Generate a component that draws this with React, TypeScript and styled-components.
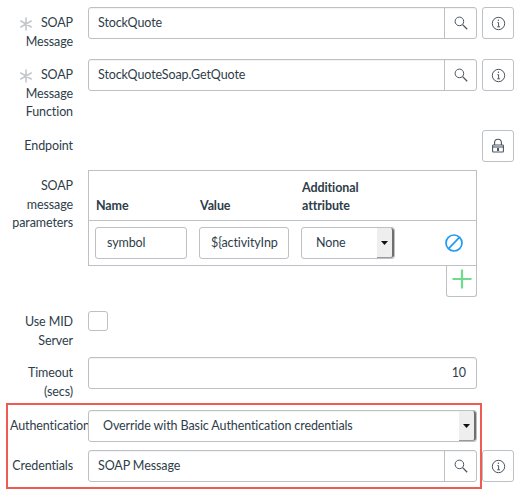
import { FC, ReactNode } from 'react';
import styled, { createGlobalStyle } from 'styled-components';

const GlobalStyle = createGlobalStyle`
  html, body {
    margin: 0;
    background: #fff;
  }
  body {
    font-family: Lato, "Noto Sans", sans-serif;
    font-size: 12.5px;
    letter-spacing: -0.1px;
    line-height: 18.7px;
    color: #2e3d49;
  }
`;

const SearchIcon: FC = () => (
  <svg width="14" height="14" viewBox="0 0 14 14" fill="none" stroke="#4a5560" strokeWidth="1">
    <circle cx="5.4" cy="5.4" r="4.3" />
    <path d="M8.6 8.6 13.2 13.2" strokeWidth="1.3" />
  </svg>
);

const InfoIcon: FC = () => (
  <svg width="15" height="15" viewBox="0 0 15 15" fill="none" stroke="#4a5560" strokeWidth="1">
    <circle cx="7.5" cy="7.5" r="6.2" />
    <path d="M6.4 6.6h1.2v4M6.2 10.8h2.8" />
    <circle cx="7.4" cy="4.2" r="0.7" fill="#4a5560" stroke="none" />
  </svg>
);

const LockIcon: FC = () => (
  <svg width="14" height="16" viewBox="0 0 14 16" fill="none" stroke="#4a5560" strokeWidth="1.1">
    <path d="M3.6 7V4.6a3.4 3.4 0 0 1 6.8 0V7" />
    <rect x="1.6" y="7" width="10.8" height="7" rx="0.8" />
    <path d="M1.6 9h10.8" />
    <rect x="6" y="10" width="2" height="3" fill="#4a5560" stroke="none" />
  </svg>
);

const StarIcon: FC = () => (
  <svg width="14" height="14" viewBox="0 0 14 14" stroke="#c4c8cb" strokeWidth="1.6" strokeLinecap="round">
    <path d="M7 1v12M1.8 4 12.2 10M1.8 10 12.2 4" />
  </svg>
);

const BlockIcon: FC = () => (
  <svg width="20" height="20" viewBox="0 0 20 20" fill="none" stroke="#1f9bf0" strokeWidth="1.7">
    <circle cx="10" cy="10" r="8" />
    <path d="M4.6 15.6 15.4 4.4" />
  </svg>
);

const PlusIcon: FC = () => (
  <svg width="20" height="20" viewBox="0 0 20 20" stroke="#6fdc8c" strokeWidth="2.2">
    <path d="M10 0.5v19M0.5 10h19" />
  </svg>
);

const SelectArrow: FC = () => (
  <ArrowBox>
    <svg width="7" height="4" viewBox="0 0 7 4">
      <path d="M0 0h7L3.5 4z" fill="#111" />
    </svg>
  </ArrowBox>
);

type FieldProps = { value: string };

const LookupField: FC<FieldProps> = ({ value }) => (
  <InputFrame>
    <InputText>{value}</InputText>
    <SearchButton><SearchIcon /></SearchButton>
  </InputFrame>
);

type RowProps = {
  label: ReactNode;
  required?: boolean;
  height: number;
  flush?: boolean;
  children: ReactNode;
  aside?: ReactNode;
};

const FormRow: FC<RowProps> = ({ label, required, height, flush, children, aside }) => (
  <Row style={{ height }}>
    <Label $flush={flush}>
      {required && <Star><StarIcon /></Star>}
      {label}
    </Label>
    <Control>{children}</Control>
    <Aside>{aside}</Aside>
  </Row>
);

const App: FC = () => (
  <Page>
    <GlobalStyle />
    <FormRow label={<>SOAP<br />Message</>} required height={52} aside={<IconButton><InfoIcon /></IconButton>}>
      <LookupField value="StockQuote" />
    </FormRow>
    <FormRow label={<>SOAP<br />Message<br />Function</>} required height={71} aside={<IconButton><InfoIcon /></IconButton>}>
      <LookupField value="StockQuoteSoap.GetQuote" />
    </FormRow>
    <FormRow label="Endpoint" height={40} aside={<IconButton><LockIcon /></IconButton>}>
      <span />
    </FormRow>
    <FormRow label={<>SOAP<br />message<br />parameters</>} height={136}>
      <ParamTable>
        <HeaderRow>
          <HeaderCell $width={104}>Name</HeaderCell>
          <HeaderCell $width={102}>Value</HeaderCell>
          <HeaderCell $width={120}>Additional<br />attribute</HeaderCell>
        </HeaderRow>
        <BodyRow>
          <CellInput $width={92} $indent={11}>symbol</CellInput>
          <CellInput $width={90} $indent={11}>{'${activityInp'}</CellInput>
          <CellSelect>
            None
            <SelectArrow />
          </CellSelect>
          <BlockSlot><BlockIcon /></BlockSlot>
        </BodyRow>
      </ParamTable>
      <AddRow>
        <AddButton><PlusIcon /></AddButton>
      </AddRow>
    </FormRow>
    <FormRow label={<>Use MID<br />Server</>} height={51}>
      <Checkbox />
    </FormRow>
    <FormRow label={<>Timeout<br />(secs)</>} height={53}>
      <InputFrame>
        <InputText $right>10</InputText>
      </InputFrame>
    </FormRow>
    <FormRow label="Authentication" flush height={40}>
      <InputFrame>
        <InputText $indent={14}>Override with Basic Authentication credentials</InputText>
        <SelectArrow />
      </InputFrame>
    </FormRow>
    <FormRow label="Credentials" height={40} aside={<IconButton><InfoIcon /></IconButton>}>
      <LookupField value="SOAP Message" />
    </FormRow>
    <Highlight />
  </Page>
);

export default App;

const Page = styled.div`
  position: relative;
  width: 526px;
  height: 494px;
  padding-top: 7px;
  box-sizing: border-box;
  overflow: hidden;
`;

const Row = styled.div`
  display: grid;
  grid-template-columns: 73px 389px 32px;
  column-gap: 15px;
`;

const Label = styled.div<{ $flush?: boolean }>`
  position: relative;
  padding-top: 7px;
  text-align: ${p => (p.$flush ? 'left' : 'right')};
  white-space: nowrap;
  ${p => p.$flush && 'padding-left: 10px; width: 88px; box-sizing: border-box; overflow: hidden;'}
`;

const Star = styled.span`
  position: absolute;
  left: 19px;
  top: 10px;
  display: flex;
`;

const Control = styled.div`
  grid-column: 2;
`;

const Aside = styled.div`
  grid-column: 3;
  margin-left: -10px;
`;

const InputFrame = styled.div`
  display: flex;
  align-items: stretch;
  height: 32px;
  box-sizing: border-box;
  border: 1px solid #bdc0c4;
  border-radius: 3px;
  background: #fff;
  box-shadow: inset 0 1px 1px rgba(0, 0, 0, 0.05);
`;

const InputText = styled.div<{ $right?: boolean; $indent?: number }>`
  flex: 1;
  display: flex;
  align-items: center;
  justify-content: ${p => (p.$right ? 'flex-end' : 'flex-start')};
  padding: 0 ${p => (p.$right ? 10 : 0)}px 0 ${p => p.$indent ?? 9}px;
`;

const SearchButton = styled.div`
  width: 31px;
  flex: none;
  display: flex;
  align-items: center;
  justify-content: center;
  border-left: 1px solid #bdc0c4;
`;

const IconButton = styled.div`
  width: 32px;
  height: 32px;
  box-sizing: border-box;
  display: flex;
  align-items: center;
  justify-content: center;
  border: 1px solid #bdc0c4;
  border-radius: 3px;
  background: #fff;
`;

const ParamTable = styled.div`
  border: 1px solid #bdc0c4;
  box-sizing: border-box;
  width: 389px;
  height: 96px;
`;

const HeaderRow = styled.div`
  display: flex;
  align-items: flex-end;
  height: 50px;
  box-sizing: border-box;
  padding: 0 0 4px 7px;
  border-bottom: 1px solid #bdc0c4;
`;

const HeaderCell = styled.div<{ $width: number }>`
  width: ${p => p.$width}px;
  font-weight: 700;
`;

const BodyRow = styled.div`
  display: flex;
  align-items: center;
  height: 44px;
  padding-left: 6px;
  gap: 12px;
`;

const CellInput = styled.div<{ $width: number; $indent: number }>`
  width: ${p => p.$width}px;
  height: 32px;
  box-sizing: border-box;
  display: flex;
  align-items: center;
  padding-left: ${p => p.$indent}px;
  border: 1px solid #bdc0c4;
  border-radius: 3px;
  overflow: hidden;
  white-space: nowrap;
`;

const CellSelect = styled(CellInput).attrs({ $width: 94, $indent: 14 })`
  justify-content: space-between;
  padding-right: 0;
`;

const ArrowBox = styled.div`
  width: 15px;
  flex: none;
  display: flex;
  align-items: center;
  justify-content: center;
  align-self: stretch;
  background: #eeeeee;
  border-right: 2px solid #6f6f6f;
  border-bottom: 1px solid #9a9a9a;
  border-radius: 0 3px 3px 0;
`;

const BlockSlot = styled.div`
  display: flex;
  margin-left: 37px;
`;

const AddRow = styled.div`
  display: flex;
  justify-content: flex-end;
`;

const AddButton = styled.div`
  width: 31px;
  height: 31px;
  box-sizing: border-box;
  display: flex;
  align-items: flex-start;
  justify-content: center;
  padding-top: 3px;
  border: 1px solid #bdc0c4;
  border-top: none;
  border-radius: 0 0 3px 3px;
`;

const Checkbox = styled.div`
  width: 20px;
  height: 20px;
  box-sizing: border-box;
  margin-top: 5px;
  border: 1px solid #bdc0c4;
  border-radius: 3px;
`;

const Highlight = styled.div`
  position: absolute;
  left: 6px;
  top: 403px;
  width: 476px;
  height: 86px;
  box-sizing: border-box;
  border: 2px solid #ef5b52;
  pointer-events: none;
`;
